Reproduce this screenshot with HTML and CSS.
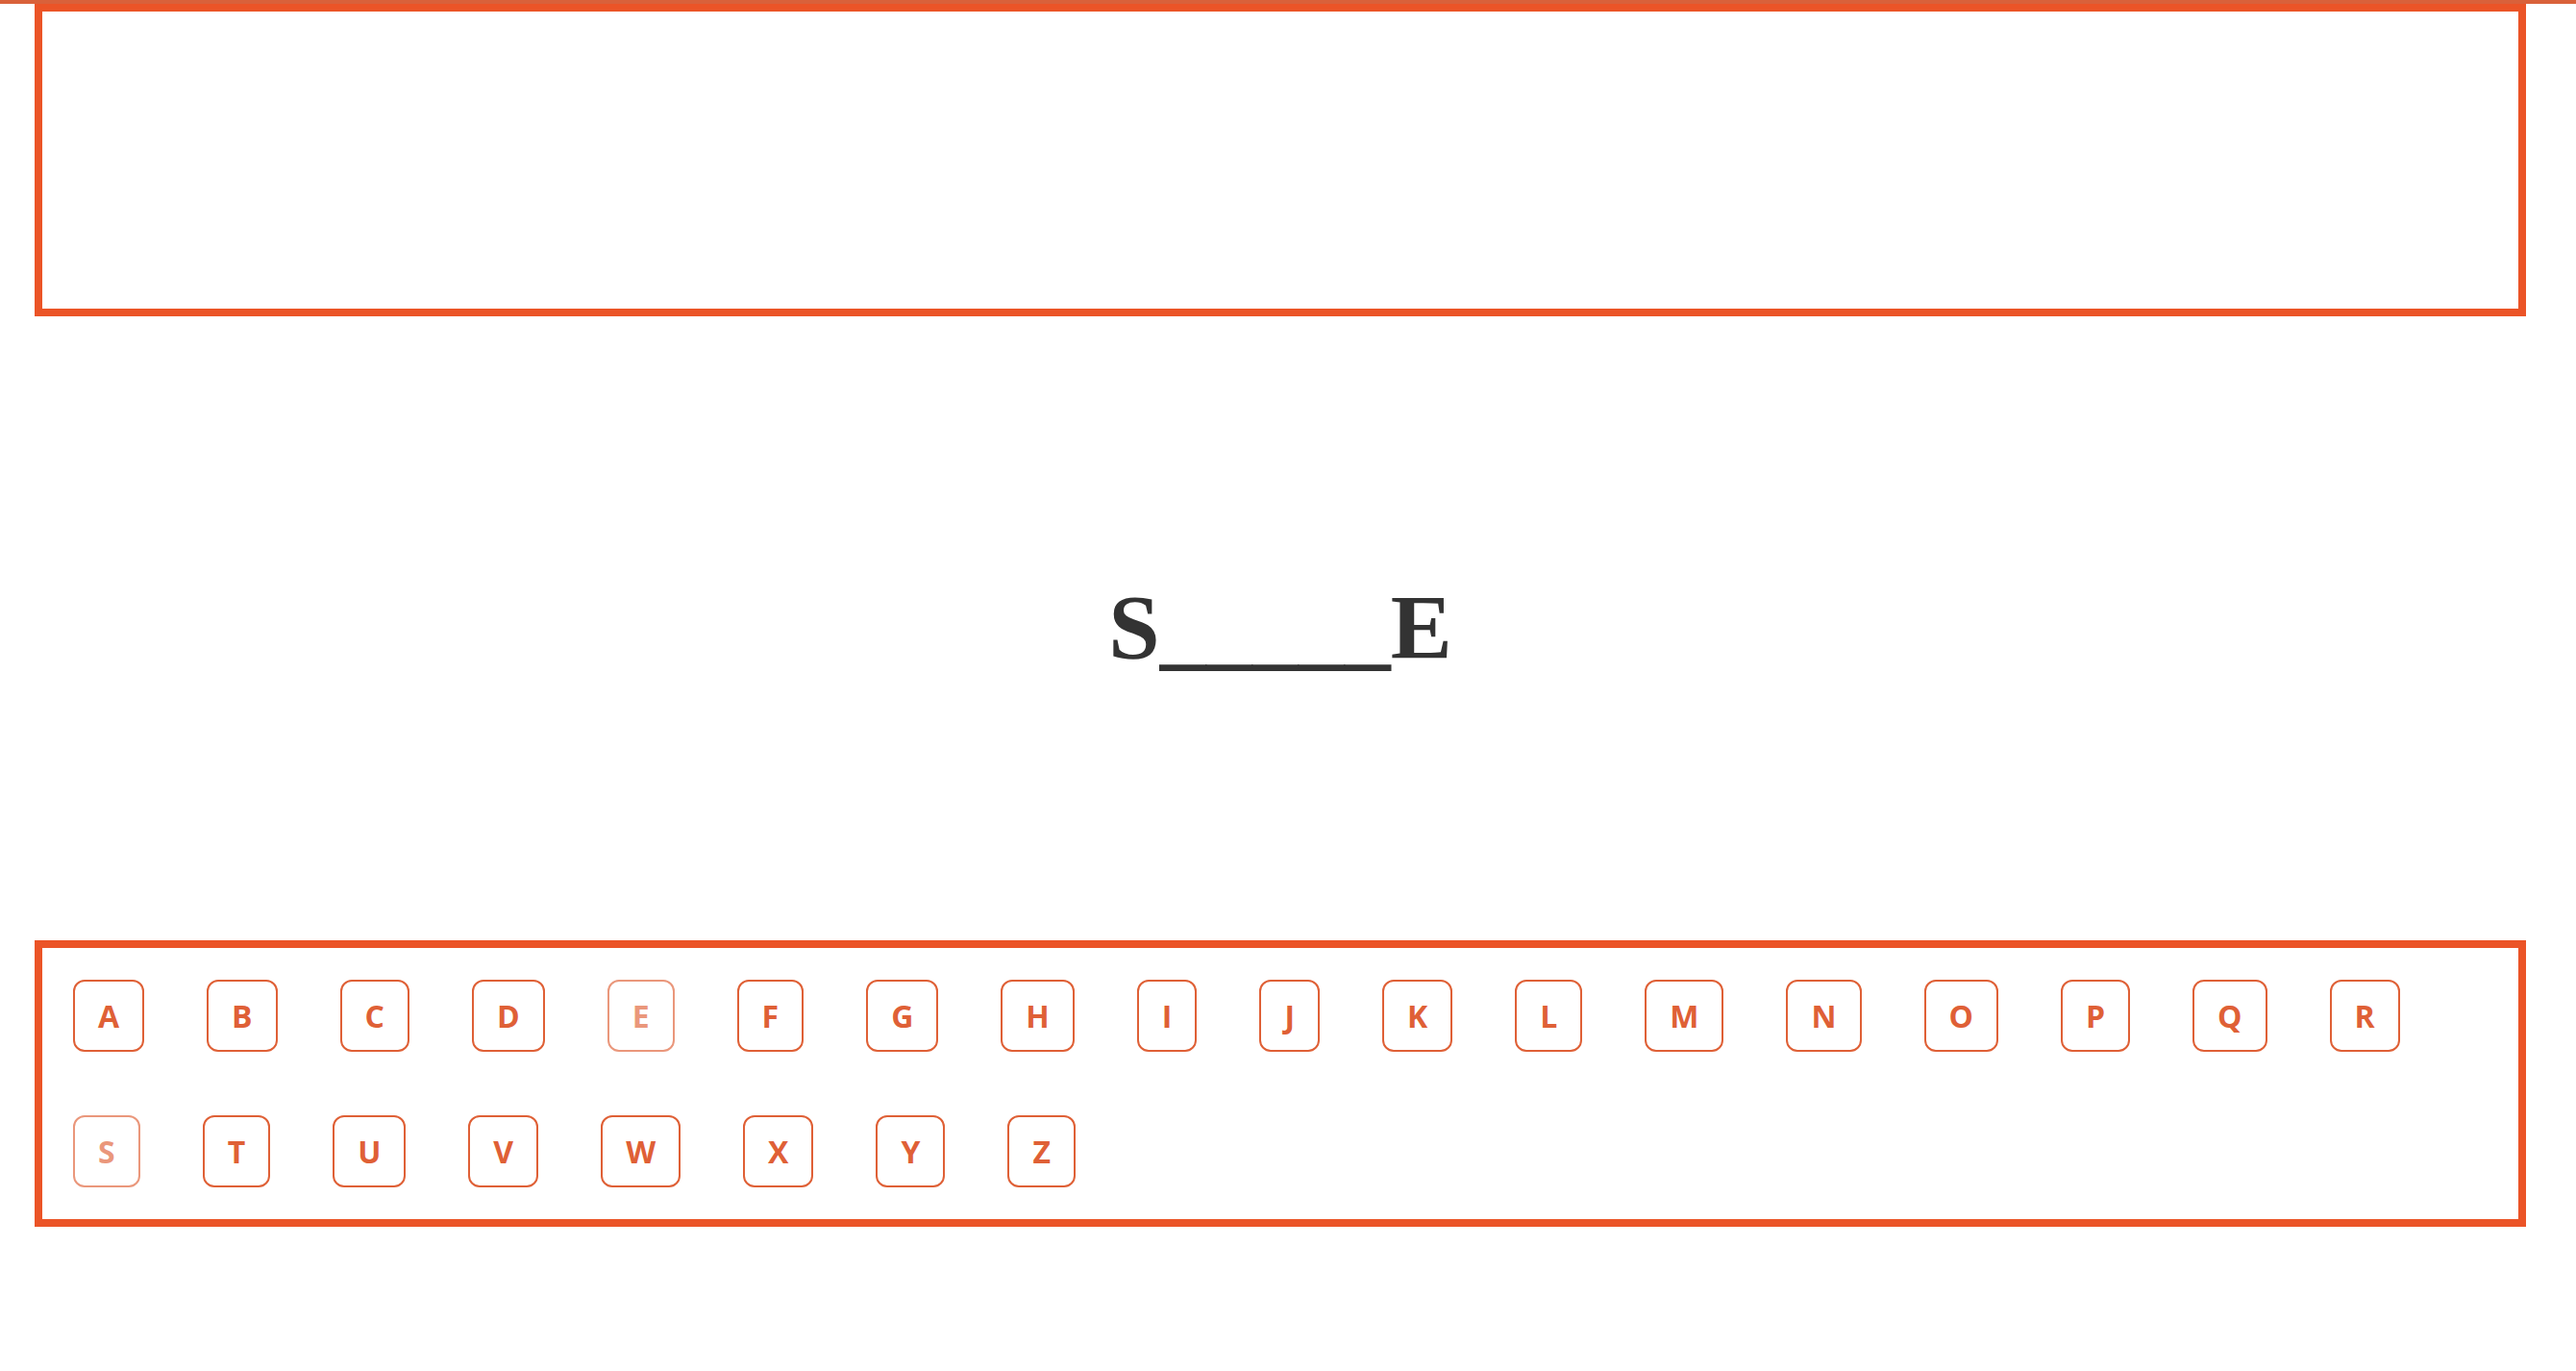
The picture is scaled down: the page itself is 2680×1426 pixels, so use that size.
FILE: index.html
```html
<!DOCTYPE html>
<html lang="en">
<head>
<meta charset="utf-8">
<title>Hangman</title>
<link rel="stylesheet" href="styles.css">
</head>
<body>
<div class="app">
  <div class="drawing"></div>
  <div class="word-area">
    <div class="word">S_____E</div>
  </div>
  <div class="keyboard">
    <button class="key">A</button>
    <button class="key">B</button>
    <button class="key">C</button>
    <button class="key">D</button>
    <button class="key used">E</button>
    <button class="key">F</button>
    <button class="key">G</button>
    <button class="key">H</button>
    <button class="key">I</button>
    <button class="key">J</button>
    <button class="key">K</button>
    <button class="key">L</button>
    <button class="key">M</button>
    <button class="key">N</button>
    <button class="key">O</button>
    <button class="key">P</button>
    <button class="key">Q</button>
    <button class="key">R</button>
    <button class="key used">S</button>
    <button class="key">T</button>
    <button class="key">U</button>
    <button class="key">V</button>
    <button class="key">W</button>
    <button class="key">X</button>
    <button class="key">Y</button>
    <button class="key">Z</button>
  </div>
</div>
</body>
</html>
```

FILE: styles.css
```css
html, body {
  margin: 0;
  padding: 0;
  background: #ffffff;
}

body {
  border-top: 4px solid #d9613a;
}

.app {
  width: 2592px;
  margin-left: 36px;
  display: flex;
  flex-direction: column;
}

.drawing {
  box-sizing: border-box;
  height: 325px;
  border: 8px solid #eb5427;
}

.word-area {
  height: 649px;
  display: flex;
  align-items: center;
  justify-content: center;
}

.word {
  font-family: "Liberation Serif", "Times New Roman", serif;
  font-weight: 700;
  font-size: 96px;
  line-height: 1.107;
  color: #333333;
}

.keyboard {
  box-sizing: border-box;
  height: 298px;
  border: 8px solid #eb5427;
  padding: 33px 32px;
  display: flex;
  flex-wrap: wrap;
  align-content: flex-start;
  gap: 66px 65px;
}

.key {
  box-sizing: border-box;
  height: 75px;
  padding: 0 24px;
  border: 2px solid #df6036;
  border-radius: 12px;
  background: #ffffff;
  color: #df6036;
  font-family: "Open Sans", "Noto Sans", sans-serif;
  font-weight: 700;
  font-size: 32px;
  line-height: 1;
  cursor: pointer;
}

.key.used {
  opacity: 0.65;
}
```
